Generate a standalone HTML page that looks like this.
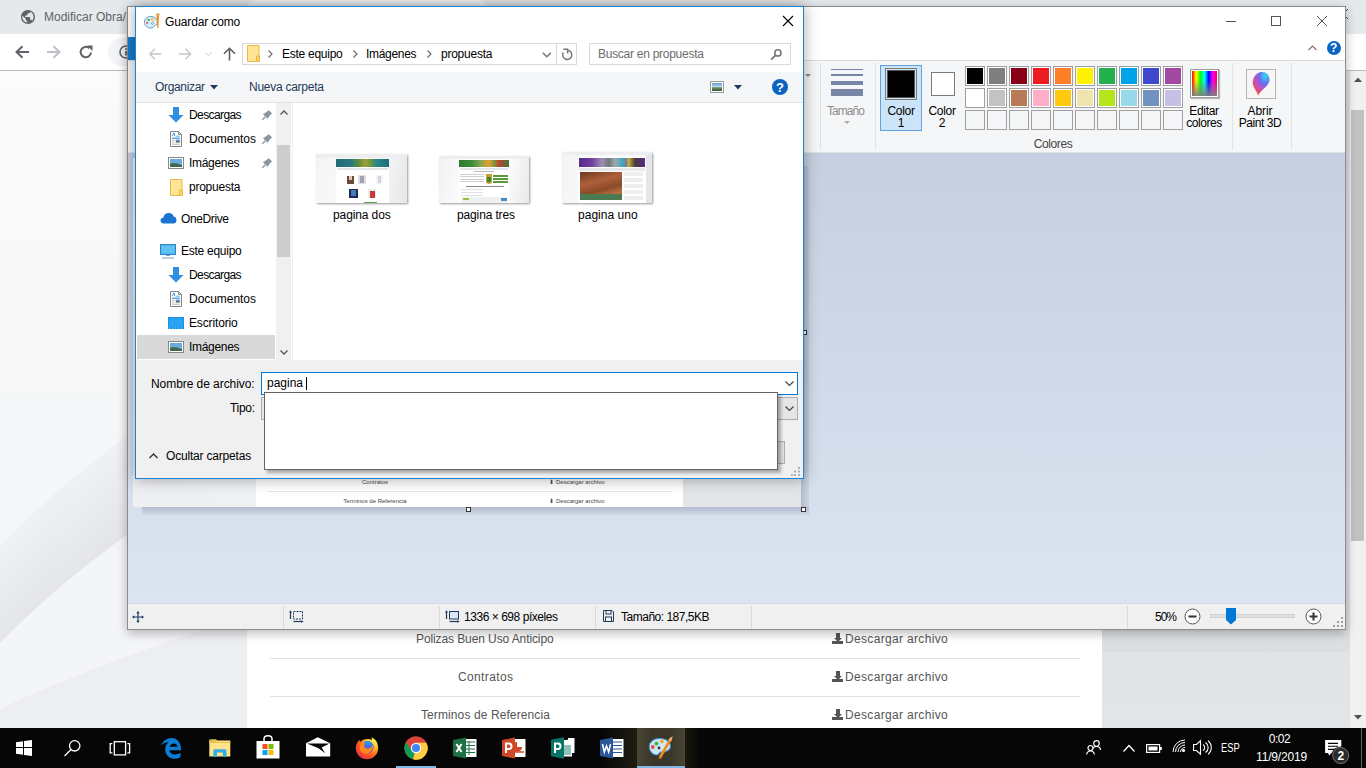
<!DOCTYPE html>
<html><head><meta charset="utf-8">
<style>
*{margin:0;padding:0;box-sizing:border-box}
html,body{width:1366px;height:768px;overflow:hidden;background:#fff;font-family:"Liberation Sans",sans-serif;font-size:12px;color:#000}
.a{position:absolute}
.t{position:absolute;white-space:nowrap;line-height:1}
svg{position:absolute;overflow:visible}
.pg{font-size:12px;color:#555}
.dl{display:block;width:11px;height:11px;background:linear-gradient(#555,#555) 4px 0/4px 5px no-repeat,linear-gradient(#555,#555) 0 8px/11px 3px no-repeat}
.dl::after{content:"";position:absolute;left:2px;top:5px;border-left:4px solid transparent;border-right:4px solid transparent;border-top:4px solid #555}
</style></head><body>

<!-- ============ CHROME (background) ============ -->
<div class="a" id="chrome" style="left:0;top:0;width:1366px;height:728px;background:#f3f4f6">
  <!-- tab strip -->
  <div class="a" style="left:0;top:0;width:1366px;height:34px;background:#e6e9ec"></div>
  <!-- nav bar -->
  <div class="a" style="left:0;top:34px;width:1366px;height:36px;background:#fff"></div>
  <div class="a" style="left:0;top:70px;width:1366px;height:1px;background:#b9babc"></div>
  <!-- page left bg -->
  <div class="a" style="left:0;top:71px;width:1350px;height:657px;background:linear-gradient(180deg,#fbfbfb 0%,#f6f7f8 50%,#f4f5f6 100%)"></div>
  <svg style="left:0;top:0" width="1350" height="728"><defs><linearGradient id="bandA" gradientUnits="userSpaceOnUse" x1="60" y1="495" x2="108" y2="550"><stop offset="0" stop-color="#eef0f2"/><stop offset="1" stop-color="#e3e5e8"/></linearGradient></defs><path d="M0 546Q150 390 450 250L450 350Q150 490 0 643Z" fill="url(#bandA)"/><path d="M0 643Q150 490 450 350L600 350L600 728L0 728Z" fill="#f4f5f7"/><path d="M0 709Q200 615 600 520L600 728L0 728Z" fill="#edeef1"/></svg>
  <!-- right grey -->
  <div class="a" style="left:1102px;top:71px;width:248px;height:657px;background:linear-gradient(180deg,#dcdee2 0,#dcdee2 581px,#e1e3e7 581px,#e3e5e8 100%)"></div>
  <!-- white column -->
  <div class="a" style="left:247px;top:71px;width:855px;height:657px;background:#fff"></div>
  <!-- scrollbar -->
  <div class="a" style="left:1350px;top:71px;width:16px;height:657px;background:#f1f1f1"></div>
  <div class="a" style="left:1351px;top:110px;width:13px;height:431px;background:#c1c1c1"></div>
  <div class="a" style="left:247px;top:0;width:240px;height:34px;border-radius:9px 9px 0 0;background:#f3f4f6"></div>
  <!-- tab -->
  <svg style="left:21px;top:10px" width="14" height="14" viewBox="2 2 20 20"><path d="M12 2C6.48 2 2 6.48 2 12s4.48 10 10 10 10-4.48 10-10S17.52 2 12 2zm-1 17.93c-3.95-.49-7-3.85-7-7.93 0-.62.08-1.21.21-1.79L9 15v1c0 1.1.9 2 2 2v1.93zm6.9-2.54c-.26-.81-1-1.39-1.9-1.39h-1v-3c0-.55-.45-1-1-1H8v-2h2c.55 0 1-.45 1-1V7h2c1.1 0 2-.9 2-2v-.41c2.93 1.19 5 4.06 5 7.41 0 2.08-.8 3.97-2.1 5.39z" fill="#5f6368"/></svg>
  <div class="t" style="left:44px;top:11px;color:#5f6368;font-size:12px">Modificar Obra/</div>
  <!-- nav -->
  <svg style="left:15px;top:45px" width="14" height="14"><path d="M14 7H2M7.5 1.2L1.5 7L7.5 12.8" stroke="#5f6368" stroke-width="2" fill="none"/></svg>
  <svg style="left:47px;top:45px" width="14" height="14"><path d="M0 7H12M6.5 1.2L12.5 7L6.5 12.8" stroke="#bdc1c6" stroke-width="2" fill="none"/></svg>
  <svg style="left:79px;top:45px" width="14" height="14"><path d="M12 7.5A5.2 5.2 0 1 1 10.3 3.2" stroke="#5f6368" stroke-width="2" fill="none"/><path d="M8 0.5H13.5V6Z" fill="#5f6368"/></svg>
  <div class="a" style="left:108px;top:38px;width:400px;height:28px;border-radius:14px;background:#f1f3f4"></div>
  <svg style="left:119px;top:45px" width="14" height="14"><circle cx="7" cy="7" r="6" fill="none" stroke="#5f6368" stroke-width="1.6"/><path d="M7 6V10.5" stroke="#5f6368" stroke-width="1.8"/><circle cx="7" cy="4" r="1" fill="#5f6368"/></svg>
  <svg style="left:1338px;top:9px" width="10" height="10"><path d="M0 0L10 10M10 0L0 10" stroke="#444" stroke-width="1"/></svg>
  <svg style="left:1354px;top:77px" width="8" height="5"><path d="M0 5L4 0.5L8 5Z" fill="#505050"/></svg>
  <svg style="left:1354px;top:715px" width="8" height="5"><path d="M0 0H8L4 4.5Z" fill="#505050"/></svg>
  <!-- page rows -->
  <div class="t pg" style="left:416px;top:633px;letter-spacing:-0.1px">Polizas Buen Uso Anticipo</div>
  <div class="t pg" style="left:845px;top:633px;letter-spacing:0.33px">Descargar archivo</div>
  <span class="dl a" style="left:832px;top:633px"></span>
  <div class="a" style="left:270px;top:658px;width:810px;height:1px;background:#dee2e6"></div>
  <div class="t pg" style="left:458px;top:671px;letter-spacing:0.37px">Contratos</div>
  <div class="t pg" style="left:845px;top:671px;letter-spacing:0.33px">Descargar archivo</div>
  <span class="dl a" style="left:832px;top:671px"></span>
  <div class="a" style="left:270px;top:696px;width:810px;height:1px;background:#dee2e6"></div>
  <div class="t pg" style="left:421px;top:709px;letter-spacing:0.1px">Terminos de Referencia</div>
  <div class="t pg" style="left:845px;top:709px;letter-spacing:0.33px">Descargar archivo</div>
  <span class="dl a" style="left:832px;top:709px"></span>
</div>

<!-- ============ PAINT WINDOW ============ -->
<div class="a" id="paint" style="left:127px;top:6px;width:1219px;height:624px;background:#fff;border:1px solid #8c8c8c;box-shadow:0 3px 10px rgba(0,0,0,.28)"></div>
<!-- title bar buttons -->
<div class="a" style="left:1226px;top:21px;width:10px;height:1px;background:#555"></div>
<div class="a" style="left:1271px;top:16px;width:10px;height:10px;border:1px solid #555"></div>
<svg style="left:1317px;top:16px" width="10" height="10"><path d="M0 0L10 10M10 0L0 10" stroke="#555" stroke-width="1"/></svg>
<!-- ribbon tab row -->
<div class="a" style="left:128px;top:37px;width:60px;height:23px;background:#1979ca"></div>
<svg style="left:1308px;top:45px" width="9" height="6"><path d="M0.5 5L4.5 1L8.5 5" stroke="#777" stroke-width="1.2" fill="none"/></svg>
<div class="a" style="left:1327px;top:41px;width:14px;height:14px;border-radius:50%;background:#0a64c0"></div>
<div class="t" style="left:1330px;top:42px;font-size:12px;font-weight:bold;color:#fff">?</div>
<!-- ribbon panel -->
<div class="a" style="left:128px;top:60px;width:1217px;height:93px;background:#f5f6f7;border-top:1px solid #dadbdc;border-bottom:1px solid #e1e2e4"></div>
<div class="a" style="left:820px;top:63px;width:1px;height:87px;background:#e2e3e4"></div>
<div class="a" style="left:875px;top:63px;width:1px;height:87px;background:#e2e3e4"></div>
<div class="a" style="left:1232px;top:63px;width:1px;height:87px;background:#e2e3e4"></div>
<div class="a" style="left:1291px;top:63px;width:1px;height:87px;background:#e2e3e4"></div>
<svg style="left:805px;top:74px" width="6" height="4"><path d="M0 0H6L3 3Z" fill="#888"/></svg>
<!-- Tamano -->
<div class="a" style="left:831px;top:69px;width:32px;height:1px;background:#7686a4"></div>
<div class="a" style="left:831px;top:74px;width:32px;height:2px;background:#7686a4"></div>
<div class="a" style="left:831px;top:81px;width:32px;height:4px;background:#7686a4"></div>
<div class="a" style="left:831px;top:89px;width:32px;height:7px;background:#7686a4"></div>
<div class="t" style="left:827px;top:105px;color:#8d8d8d;letter-spacing:-0.94px">Tamaño</div>
<svg style="left:844px;top:121px" width="6" height="4"><path d="M0 0H6L3 3Z" fill="#aaa"/></svg>
<!-- Color 1 -->
<div class="a" style="left:880px;top:65px;width:42px;height:66px;background:#cce4f7;border:1px solid #62a2e4"></div>
<div class="a" style="left:885px;top:68px;width:32px;height:32px;border:1px solid #7a7a7a;background:#cce4f7;padding:1px"><div style="width:100%;height:100%;background:#000;border:1px solid #555"></div></div>
<div class="t" style="left:885px;top:105px;text-align:center;width:32px;letter-spacing:-0.3px">Color</div>
<div class="t" style="left:885px;top:117px;text-align:center;width:32px">1</div>
<!-- Color 2 -->
<div class="a" style="left:931px;top:72px;width:24px;height:24px;border:1px solid #7a7a7a;background:#fff"></div>
<div class="t" style="left:926px;top:105px;text-align:center;width:32px;letter-spacing:-0.3px">Color</div>
<div class="t" style="left:926px;top:117px;text-align:center;width:32px">2</div>
<div class="a" style="left:965px;top:66px;width:20px;height:20px;border:1px solid #a0a0a0;background:#fff;padding:1px"><div style="width:100%;height:100%;background:#000000"></div></div>
<div class="a" style="left:987px;top:66px;width:20px;height:20px;border:1px solid #a0a0a0;background:#fff;padding:1px"><div style="width:100%;height:100%;background:#7f7f7f"></div></div>
<div class="a" style="left:1009px;top:66px;width:20px;height:20px;border:1px solid #a0a0a0;background:#fff;padding:1px"><div style="width:100%;height:100%;background:#880015"></div></div>
<div class="a" style="left:1031px;top:66px;width:20px;height:20px;border:1px solid #a0a0a0;background:#fff;padding:1px"><div style="width:100%;height:100%;background:#ed1c24"></div></div>
<div class="a" style="left:1053px;top:66px;width:20px;height:20px;border:1px solid #a0a0a0;background:#fff;padding:1px"><div style="width:100%;height:100%;background:#ff7f27"></div></div>
<div class="a" style="left:1075px;top:66px;width:20px;height:20px;border:1px solid #a0a0a0;background:#fff;padding:1px"><div style="width:100%;height:100%;background:#fff200"></div></div>
<div class="a" style="left:1097px;top:66px;width:20px;height:20px;border:1px solid #a0a0a0;background:#fff;padding:1px"><div style="width:100%;height:100%;background:#22b14c"></div></div>
<div class="a" style="left:1119px;top:66px;width:20px;height:20px;border:1px solid #a0a0a0;background:#fff;padding:1px"><div style="width:100%;height:100%;background:#00a2e8"></div></div>
<div class="a" style="left:1141px;top:66px;width:20px;height:20px;border:1px solid #a0a0a0;background:#fff;padding:1px"><div style="width:100%;height:100%;background:#3f48cc"></div></div>
<div class="a" style="left:1163px;top:66px;width:20px;height:20px;border:1px solid #a0a0a0;background:#fff;padding:1px"><div style="width:100%;height:100%;background:#a349a4"></div></div>
<div class="a" style="left:965px;top:88px;width:20px;height:20px;border:1px solid #a0a0a0;background:#fff;padding:1px"><div style="width:100%;height:100%;background:#ffffff"></div></div>
<div class="a" style="left:987px;top:88px;width:20px;height:20px;border:1px solid #a0a0a0;background:#fff;padding:1px"><div style="width:100%;height:100%;background:#c3c3c3"></div></div>
<div class="a" style="left:1009px;top:88px;width:20px;height:20px;border:1px solid #a0a0a0;background:#fff;padding:1px"><div style="width:100%;height:100%;background:#b97a57"></div></div>
<div class="a" style="left:1031px;top:88px;width:20px;height:20px;border:1px solid #a0a0a0;background:#fff;padding:1px"><div style="width:100%;height:100%;background:#ffaec9"></div></div>
<div class="a" style="left:1053px;top:88px;width:20px;height:20px;border:1px solid #a0a0a0;background:#fff;padding:1px"><div style="width:100%;height:100%;background:#ffc90e"></div></div>
<div class="a" style="left:1075px;top:88px;width:20px;height:20px;border:1px solid #a0a0a0;background:#fff;padding:1px"><div style="width:100%;height:100%;background:#efe4b0"></div></div>
<div class="a" style="left:1097px;top:88px;width:20px;height:20px;border:1px solid #a0a0a0;background:#fff;padding:1px"><div style="width:100%;height:100%;background:#b5e61d"></div></div>
<div class="a" style="left:1119px;top:88px;width:20px;height:20px;border:1px solid #a0a0a0;background:#fff;padding:1px"><div style="width:100%;height:100%;background:#99d9ea"></div></div>
<div class="a" style="left:1141px;top:88px;width:20px;height:20px;border:1px solid #a0a0a0;background:#fff;padding:1px"><div style="width:100%;height:100%;background:#7092be"></div></div>
<div class="a" style="left:1163px;top:88px;width:20px;height:20px;border:1px solid #a0a0a0;background:#fff;padding:1px"><div style="width:100%;height:100%;background:#c8bfe7"></div></div>
<div class="a" style="left:965px;top:110px;width:20px;height:20px;border:1px solid #a0a0a0;background:#f5f6f7"></div>
<div class="a" style="left:987px;top:110px;width:20px;height:20px;border:1px solid #a0a0a0;background:#f5f6f7"></div>
<div class="a" style="left:1009px;top:110px;width:20px;height:20px;border:1px solid #a0a0a0;background:#f5f6f7"></div>
<div class="a" style="left:1031px;top:110px;width:20px;height:20px;border:1px solid #a0a0a0;background:#f5f6f7"></div>
<div class="a" style="left:1053px;top:110px;width:20px;height:20px;border:1px solid #a0a0a0;background:#f5f6f7"></div>
<div class="a" style="left:1075px;top:110px;width:20px;height:20px;border:1px solid #a0a0a0;background:#f5f6f7"></div>
<div class="a" style="left:1097px;top:110px;width:20px;height:20px;border:1px solid #a0a0a0;background:#f5f6f7"></div>
<div class="a" style="left:1119px;top:110px;width:20px;height:20px;border:1px solid #a0a0a0;background:#f5f6f7"></div>
<div class="a" style="left:1141px;top:110px;width:20px;height:20px;border:1px solid #a0a0a0;background:#f5f6f7"></div>
<div class="a" style="left:1163px;top:110px;width:20px;height:20px;border:1px solid #a0a0a0;background:#f5f6f7"></div>
<div class="t" style="left:1023px;top:138px;width:60px;text-align:center;color:#444;letter-spacing:-0.38px">Colores</div>
<!-- Editar colores -->
<div class="a" style="left:1190px;top:69px;width:29px;height:29px;border:1px solid #9a9a9a;background:#fff;padding:1px;box-shadow:1px 1px 1px rgba(0,0,0,.25)"><div style="width:100%;height:100%;background:linear-gradient(180deg,rgba(128,128,128,0) 0%,rgba(128,128,128,0) 35%,rgba(128,128,128,.95) 100%),linear-gradient(90deg,#f00 0%,#ff0 17%,#0f0 33%,#0ff 50%,#00f 67%,#f0f 83%,#f04 100%)"></div></div>
<div class="t" style="left:1174px;top:105px;width:60px;text-align:center;letter-spacing:-0.3px">Editar</div>
<div class="t" style="left:1174px;top:117px;width:60px;text-align:center;letter-spacing:-0.45px">colores</div>
<!-- Paint 3D -->
<div class="a" style="left:1246px;top:69px;width:30px;height:30px;border:1px solid #b4b4b4;background:#f6f6f6"></div>
<svg style="left:1251px;top:71px" width="20" height="26"><defs><radialGradient id="p3" cx=".75" cy=".15" r="1"><stop offset="0" stop-color="#2fe0f0"/><stop offset=".35" stop-color="#6a6cf0"/><stop offset=".6" stop-color="#c050c0"/><stop offset=".8" stop-color="#f04a70"/><stop offset="1" stop-color="#ffa020"/></radialGradient></defs><path d="M11 1C15.5 1 18.5 4.5 18.5 8.5C18.5 13 14 16.5 10 20.5C8.5 22 7.5 23.5 7 25C6.5 21 3 18 2 14C1 9.5 3 5 6 2.8C7.5 1.6 9.2 1 11 1Z" fill="url(#p3)"/></svg>
<div class="t" style="left:1230px;top:105px;width:60px;text-align:center;letter-spacing:-0.08px">Abrir</div>
<div class="t" style="left:1230px;top:117px;width:60px;text-align:center;letter-spacing:-0.43px">Paint 3D</div>
<!-- canvas -->
<div class="a" style="left:128px;top:153px;width:1217px;height:450px;background:linear-gradient(180deg,#c6cfe1 0%,#dbe4f0 100%)"></div>
<!-- image on canvas -->
<div class="a" style="left:801px;top:166px;width:8px;height:341px;background:linear-gradient(90deg,rgba(80,95,125,.28),rgba(80,95,125,.08))"></div>
<div class="a" style="left:142px;top:507px;width:667px;height:8px;background:linear-gradient(180deg,rgba(80,95,125,.28),rgba(80,95,125,.06))"></div>
<div class="a" style="left:133px;top:158px;width:668px;height:349px;overflow:hidden;background:linear-gradient(160deg,#f6f7f8 0%,#eceef0 50%,#f3f4f6 100%)">
  <div class="a" style="left:123px;top:0;width:427px;height:349px;background:#fff"></div>
  <div class="a" style="left:550px;top:0;width:118px;height:349px;background:#e3e5e8"></div>
  <div class="t" style="left:176px;top:321px;width:132px;text-align:center;font-size:6px;color:#444">Contratos</div>
  <div class="t" style="left:387px;top:321px;width:114px;text-align:center;font-size:6px;color:#444">&#11015; Descargar archivo</div>
  <div class="a" style="left:134px;top:333px;width:405px;height:1px;background:#e4e4e4"></div>
  <div class="t" style="left:176px;top:340px;width:132px;text-align:center;font-size:6px;color:#444">Terminos de Referencia</div>
  <div class="t" style="left:387px;top:340px;width:114px;text-align:center;font-size:6px;color:#444">&#11015; Descargar archivo</div>
</div>
<div class="a" style="left:466px;top:507px;width:5px;height:5px;border:1px solid #333;background:#fff"></div>
<div class="a" style="left:801px;top:507px;width:5px;height:5px;border:1px solid #333;background:#fff"></div>
<div class="a" style="left:802px;top:330px;width:5px;height:5px;border:1px solid #333;background:#fff"></div>
<!-- status bar -->
<div class="a" style="left:128px;top:603px;width:1217px;height:26px;background:#f0f0f0;border-top:1px solid #dadada"></div>
<div class="a" style="left:283px;top:606px;width:1px;height:22px;background:#dadada"></div>
<div class="a" style="left:439px;top:606px;width:1px;height:22px;background:#dadada"></div>
<div class="a" style="left:595px;top:606px;width:1px;height:22px;background:#dadada"></div>
<div class="a" style="left:751px;top:606px;width:1px;height:22px;background:#dadada"></div>
<div class="a" style="left:1127px;top:606px;width:1px;height:22px;background:#dadada"></div>
<svg style="left:132px;top:611px" width="12" height="12"><path d="M6 1.5V10.5M1.5 6H10.5" stroke="#1e3a5f" stroke-width="1.2"/><path d="M6 0L4.2 2.2H7.8ZM6 12L4.2 9.8H7.8ZM0 6L2.2 4.2V7.8ZM12 6L9.8 4.2V7.8Z" fill="#1e3a5f"/></svg>
<svg style="left:289px;top:610px" width="15" height="13"><path d="M1.5 2V9" stroke="#1e3a5f" stroke-width="1.2"/><path d="M1.5 0.3L0 2.5H3Z" fill="#1e3a5f"/><rect x="4.5" y="1.5" width="9" height="7.5" fill="none" stroke="#1e3a5f" stroke-dasharray="2 1"/><path d="M4.5 11.5H12.5" stroke="#1e3a5f" stroke-width="1.2"/><path d="M14.5 11.5L12.3 10V13Z" fill="#1e3a5f"/></svg>
<svg style="left:445px;top:610px" width="15" height="13"><path d="M1.5 2V9" stroke="#1e3a5f" stroke-width="1.2"/><path d="M1.5 0.3L0 2.5H3Z" fill="#1e3a5f"/><rect x="4.5" y="1.5" width="9" height="7.5" fill="#dbe8f4" stroke="#1e3a5f"/><path d="M4.5 11.5H12.5" stroke="#1e3a5f" stroke-width="1.2"/><path d="M14.5 11.5L12.3 10V13Z" fill="#1e3a5f"/></svg>
<div class="t" style="left:464px;top:611px;letter-spacing:-0.46px">1336 × 698 píxeles</div>
<svg style="left:603px;top:610px" width="11" height="12"><path d="M0.5 0.5H9L10.5 2V11.5H0.5Z" fill="none" stroke="#1e3a5f"/><rect x="3" y="0.5" width="5" height="3.5" fill="none" stroke="#1e3a5f"/><rect x="2.5" y="7" width="6" height="4.5" fill="none" stroke="#1e3a5f"/></svg>
<div class="t" style="left:621px;top:611px;letter-spacing:-0.49px">Tamaño: 187,5KB</div>
<div class="t" style="left:1155px;top:611px;letter-spacing:-1.0px">50%</div>
<svg style="left:1184px;top:608px" width="17" height="17"><circle cx="8.5" cy="8.5" r="7.5" fill="#fff" stroke="#555"/><path d="M4.5 8.5H12.5" stroke="#333" stroke-width="2"/></svg>
<div class="a" style="left:1210px;top:614px;width:85px;height:4px;background:#e0e0e0;border:1px solid #d0d0d0"></div>
<svg style="left:1226px;top:608px" width="11" height="17"><path d="M0 0H10V12L5 16.5L0 12Z" fill="#0078d7"/></svg>
<svg style="left:1305px;top:608px" width="17" height="17"><circle cx="8.5" cy="8.5" r="7.5" fill="#fff" stroke="#555"/><path d="M4.5 8.5H12.5M8.5 4.5V12.5" stroke="#333" stroke-width="2"/></svg>
<svg style="left:1333px;top:617px" width="10" height="10"><g fill="#a0a0a0"><rect x="8" y="0" width="2" height="2"/><rect x="4" y="4" width="2" height="2"/><rect x="8" y="4" width="2" height="2"/><rect x="0" y="8" width="2" height="2"/><rect x="4" y="8" width="2" height="2"/><rect x="8" y="8" width="2" height="2"/></g></svg>


<!-- ============ SAVE DIALOG ============ -->
<div class="a" id="dlg" style="left:135px;top:6px;width:669px;height:473px;background:#fff;border:1px solid #1883d7;box-shadow:0 0 14px rgba(0,0,0,.35)"></div>
<!-- title -->
<svg style="left:144px;top:13px" width="17" height="16"><path d="M6.8 3.5C2.8 3.5 0.5 6 0.5 9.2C0.5 12.6 3.2 15 6.8 15C9.2 15 9.6 13.5 10.8 12.8C12.3 12 13.5 11 13.5 9C13.5 5.8 10.8 3.5 6.8 3.5Z" fill="#daedf8" stroke="#4a90c8" stroke-width="0.9"/><circle cx="4.7" cy="6.9" r="1.2" fill="#3cb44a"/><circle cx="8.5" cy="6.3" r="1.1" fill="#fff3c0" stroke="#f5a623" stroke-width="0.9"/><circle cx="3.2" cy="9.8" r="1.1" fill="#e94e3c"/><circle cx="8.5" cy="10.4" r="1" fill="#fff" stroke="#3d8ac0" stroke-width="0.8"/><ellipse cx="13.8" cy="1.6" rx="2.2" ry="1.3" fill="#e0b070"/><path d="M12.6 2.6H15L14.3 15.2H13.3Z" fill="#f08a1a"/></svg>
<div class="t" style="left:165px;top:16px;font-size:12px;color:#000;letter-spacing:-0.13px">Guardar como</div>
<svg style="left:783px;top:16px" width="10" height="10"><path d="M0 0L10 10M10 0L0 10" stroke="#000" stroke-width="1.1"/></svg>
<!-- nav buttons -->
<svg style="left:149px;top:48px" width="13" height="12"><path d="M12.5 6H1M6 0.8L0.8 6L6 11.2" stroke="#c6c6c6" stroke-width="1.3" fill="none"/></svg>
<svg style="left:179px;top:48px" width="13" height="12"><path d="M0 6H11.5M6.5 0.8L11.7 6L6.5 11.2" stroke="#c6c6c6" stroke-width="1.3" fill="none"/></svg>
<svg style="left:205px;top:52px" width="7" height="4"><path d="M0.5 0.5L3.5 3.3L6.5 0.5" stroke="#c6c6c6" stroke-width="1" fill="none"/></svg>
<svg style="left:223px;top:47px" width="13" height="14"><path d="M6.5 13.5V1.5M1 6.8L6.5 1.3L12 6.8" stroke="#5d5d5d" stroke-width="1.6" fill="none"/></svg>
<!-- address bar -->
<div class="a" style="left:242px;top:43px;width:335px;height:22px;border:1px solid #d9d9d9;background:#fff"></div>
<div class="a" style="left:556px;top:44px;width:1px;height:20px;background:#d9d9d9"></div>
<svg style="left:247px;top:45px" width="14" height="17"><path d="M0.5 0.5H12V16.5H0.5Z" fill="#ffe594" stroke="#e8b84a"/><path d="M9.5 11V16.5H12.5V11Z" fill="#ffd560" stroke="#e8b84a"/></svg>
<svg style="left:268px;top:50px" width="5" height="8"><path d="M0.5 0.5L4 4L0.5 7.5" stroke="#666" stroke-width="1.1" fill="none"/></svg>
<div class="t" style="left:282px;top:48px;letter-spacing:-0.26px">Este equipo</div>
<svg style="left:353px;top:50px" width="5" height="8"><path d="M0.5 0.5L4 4L0.5 7.5" stroke="#666" stroke-width="1.1" fill="none"/></svg>
<div class="t" style="left:366px;top:48px;letter-spacing:-0.3px">Imágenes</div>
<svg style="left:427px;top:50px" width="5" height="8"><path d="M0.5 0.5L4 4L0.5 7.5" stroke="#666" stroke-width="1.1" fill="none"/></svg>
<div class="t" style="left:441px;top:48px;letter-spacing:-0.24px">propuesta</div>
<svg style="left:542px;top:52px" width="10" height="6"><path d="M0.8 0.8L4.8 4.8L8.8 0.8" stroke="#777" stroke-width="1.5" fill="none"/></svg>
<svg style="left:561px;top:48px" width="13" height="14"><path d="M7.2 2.3A4.6 4.6 0 1 1 2.3 4.4" stroke="#777" stroke-width="1.5" fill="none"/><path d="M2.4 1.2H6.6V5.4" stroke="#777" stroke-width="1.5" fill="none"/></svg>
<!-- search -->
<div class="a" style="left:589px;top:43px;width:202px;height:22px;border:1px solid #d9d9d9;background:#fff"></div>
<div class="t" style="left:598px;top:48px;color:#6d6d6d;letter-spacing:-0.27px">Buscar en propuesta</div>
<svg style="left:770px;top:49px" width="12" height="12"><circle cx="7.9" cy="3.9" r="3.1" fill="none" stroke="#777" stroke-width="1.6"/><path d="M5.6 6.2L1.2 10.6" stroke="#777" stroke-width="1.8"/></svg>
<!-- toolbar -->
<div class="a" style="left:136px;top:72px;width:667px;height:31px;background:#f5f6f7;border-bottom:1px solid #e3e4e5"></div>
<div class="t" style="left:155px;top:81px;color:#1e395b;letter-spacing:-0.34px">Organizar</div>
<svg style="left:210px;top:85px" width="8" height="5"><path d="M0 0H8L4 4.5Z" fill="#1e395b"/></svg>
<div class="t" style="left:249px;top:81px;color:#1e395b;letter-spacing:-0.26px">Nueva carpeta</div>
<div class="a" style="left:710px;top:81px;width:14px;height:12px;border:1px solid #9a9a9a;background:#fff;padding:1px"><div style="width:100%;height:100%;background:linear-gradient(180deg,#5b9bd5 0%,#b8d4ee 45%,#6b8e5a 60%,#2f5a3a 100%)"></div></div>
<svg style="left:734px;top:85px" width="8" height="5"><path d="M0 0H8L4 4.5Z" fill="#1e395b"/></svg>
<div class="a" style="left:772px;top:79px;width:16px;height:16px;border-radius:50%;background:#0a64c0"></div>
<div class="t" style="left:776px;top:81px;font-size:13px;font-weight:bold;color:#fff">?</div>
<!-- nav pane -->
<div class="a" style="left:136px;top:103px;width:140px;height:257px;background:#fff"></div>
<div class="a" style="left:276px;top:103px;width:15px;height:257px;background:#f0f0f0"></div>
<div class="a" style="left:277px;top:145px;width:13px;height:112px;background:#cdcdcd"></div>
<svg style="left:280px;top:110px" width="8" height="5"><path d="M0.5 4.5L4 1L7.5 4.5" stroke="#555" stroke-width="1.3" fill="none"/></svg>
<svg style="left:280px;top:350px" width="8" height="5"><path d="M0.5 0.5L4 4L7.5 0.5" stroke="#555" stroke-width="1.3" fill="none"/></svg>
<div class="a" style="left:292px;top:103px;width:1px;height:257px;background:#f0f0f0"></div>
<div class="a" style="left:137px;top:335px;width:138px;height:24px;background:#d9d9d9"></div>
<svg style="left:168px;top:107px" width="16" height="16"><path d="M5 0H11V8H15.5L8 15.5L0.5 8H5Z" fill="#2f8fe0"/></svg>
<div class="t" style="left:189px;top:109px;letter-spacing:-0.6px">Descargas</div>
<svg style="left:258px;top:106px" width="18" height="18"><path d="M10.5 4L14.2 7.6L12.5 8.4L9.6 12.8L5 8.3L9.3 5.6Z" fill="#8a96a0"/><path d="M4.3 13.8L7.2 10.9" stroke="#8a96a0" stroke-width="1.4"/></svg>
<svg style="left:170px;top:131px" width="12" height="16"><path d="M0.5 0.5H8.5L11.5 3.5V15.5H0.5Z" fill="#fff" stroke="#858585"/><path d="M8.5 0.5V3.5H11.5" fill="none" stroke="#858585"/><path d="M2.2 5.3L4 1.8L5 5.3" stroke="#2f8ae0" stroke-width="0.9" fill="none"/><path d="M6 5.2H9.6" stroke="#45a8e8" stroke-width="0.9"/><path d="M2 7.2H9.8" stroke="#1878d8" stroke-width="1"/><path d="M2 9.3H4.4M2 11.2H4.4" stroke="#9a9a9a" stroke-width="0.7"/><rect x="5.8" y="8.6" width="4" height="1.4" fill="#5a8ef0"/><rect x="5.8" y="10.2" width="4" height="1.3" fill="#2a5a2a"/><path d="M2 13.2H9.8" stroke="#aaa" stroke-width="0.8"/></svg>
<div class="t" style="left:189px;top:133px;letter-spacing:-0.04px">Documentos</div>
<svg style="left:258px;top:130px" width="18" height="18"><path d="M10.5 4L14.2 7.6L12.5 8.4L9.6 12.8L5 8.3L9.3 5.6Z" fill="#8a96a0"/><path d="M4.3 13.8L7.2 10.9" stroke="#8a96a0" stroke-width="1.4"/></svg>
<svg style="left:168px;top:157px" width="16" height="12"><rect x="0.5" y="0.5" width="15" height="11" fill="#fff" stroke="#888"/><rect x="2" y="2" width="12" height="8" fill="#6fa8dc"/><path d="M2 7C5 5 8 6 14 8V10H2Z" fill="#3d6b4a"/></svg>
<div class="t" style="left:189px;top:157px;letter-spacing:-0.3px">Imágenes</div>
<svg style="left:258px;top:154px" width="18" height="18"><path d="M10.5 4L14.2 7.6L12.5 8.4L9.6 12.8L5 8.3L9.3 5.6Z" fill="#8a96a0"/><path d="M4.3 13.8L7.2 10.9" stroke="#8a96a0" stroke-width="1.4"/></svg>
<svg style="left:170px;top:179px" width="14" height="17"><path d="M0.5 0.5H12V16.5H0.5Z" fill="#ffe594" stroke="#e8b84a"/><path d="M9.5 11V16.5H12.5V11Z" fill="#ffd560" stroke="#e8b84a"/></svg>
<div class="t" style="left:189px;top:181px;letter-spacing:-0.24px">propuesta</div>
<svg style="left:160px;top:212px" width="17" height="12"><path d="M3.5 11.5C1.5 11.5 0.5 10 0.5 8.5C0.5 7 1.8 5.8 3.3 5.8C3.8 3 6 1 8.8 1C11.3 1 13.2 2.6 13.8 4.8C15.5 5 16.5 6.3 16.5 8.2C16.5 10.2 15.2 11.5 13.5 11.5Z" fill="#1a73d2"/></svg>
<div class="t" style="left:181px;top:213px;letter-spacing:-0.39px">OneDrive</div>
<svg style="left:160px;top:244px" width="16" height="15"><rect x="0.5" y="0.5" width="15" height="10" fill="#4cb3f0" stroke="#2a86c8"/><rect x="1.5" y="1.5" width="13" height="8" fill="#5fc2f5"/><path d="M6 11.5H10M2 14H14" stroke="#7aa7cc" stroke-width="1.2"/></svg>
<div class="t" style="left:181px;top:245px;letter-spacing:-0.26px">Este equipo</div>
<svg style="left:168px;top:267px" width="16" height="16"><path d="M5 0H11V8H15.5L8 15.5L0.5 8H5Z" fill="#2f8fe0"/></svg>
<div class="t" style="left:189px;top:269px;letter-spacing:-0.6px">Descargas</div>
<svg style="left:170px;top:291px" width="12" height="16"><path d="M0.5 0.5H8.5L11.5 3.5V15.5H0.5Z" fill="#fff" stroke="#858585"/><path d="M8.5 0.5V3.5H11.5" fill="none" stroke="#858585"/><path d="M2.2 5.3L4 1.8L5 5.3" stroke="#2f8ae0" stroke-width="0.9" fill="none"/><path d="M6 5.2H9.6" stroke="#45a8e8" stroke-width="0.9"/><path d="M2 7.2H9.8" stroke="#1878d8" stroke-width="1"/><path d="M2 9.3H4.4M2 11.2H4.4" stroke="#9a9a9a" stroke-width="0.7"/><rect x="5.8" y="8.6" width="4" height="1.4" fill="#5a8ef0"/><rect x="5.8" y="10.2" width="4" height="1.3" fill="#2a5a2a"/><path d="M2 13.2H9.8" stroke="#aaa" stroke-width="0.8"/></svg>
<div class="t" style="left:189px;top:293px;letter-spacing:-0.04px">Documentos</div>
<svg style="left:168px;top:317px" width="16" height="12"><rect x="0" y="0" width="16" height="12" fill="#1890e8"/><rect x="1" y="1" width="14" height="9" fill="#27a4f2"/><path d="M1 11H15" stroke="#ddeefa" stroke-width="0.8" stroke-dasharray="1 2"/></svg>
<div class="t" style="left:189px;top:317px;letter-spacing:-0.14px">Escritorio</div>
<svg style="left:168px;top:341px" width="16" height="12"><rect x="0.5" y="0.5" width="15" height="11" fill="#fff" stroke="#888"/><rect x="2" y="2" width="12" height="8" fill="#6fa8dc"/><path d="M2 7C5 5 8 6 14 8V10H2Z" fill="#3d6b4a"/></svg>
<div class="t" style="left:189px;top:341px;letter-spacing:-0.3px">Imágenes</div>

<!-- thumbnails -->
<div class="a" style="left:316px;top:154px;width:91px;height:49px;background:linear-gradient(100deg,#f3f4f5 0%,#fafafa 40%,#f0f1f3 80%,#e4e6e9 100%);box-shadow:1px 1px 2px rgba(0,0,0,.4);overflow:hidden">
  <div class="a" style="left:0;top:0;width:91px;height:4px;background:#eceef0"></div>
  <div class="a" style="left:20px;top:5px;width:53px;height:44px;background:#fff"></div>
  <div class="a" style="left:20px;top:5px;width:53px;height:8px;background:linear-gradient(90deg,#1f6a78 0%,#2a7a80 30%,#5a8a3a 42%,#a0a040 55%,#6a9a30 65%,#2a8a8a 75%,#1f6a78 100%)"></div>
  <div class="a" style="left:21px;top:14px;width:51px;height:2px;background:#e3e6ea"></div>
  <div class="a" style="left:31px;top:22px;width:7px;height:8px;background:#6a4a3a"></div>
  <div class="a" style="left:33px;top:22px;width:3px;height:4px;background:#e6c8b0"></div>
  <div class="a" style="left:42px;top:21px;width:8px;height:9px;background:#e8dcd8"></div>
  <div class="a" style="left:44px;top:22px;width:4px;height:7px;background:#9aa6c0"></div>
  <div class="a" style="left:60px;top:21px;width:7px;height:9px;background:#f4f4f6"></div>
  <div class="a" style="left:62px;top:22px;width:3px;height:7px;background:#d0d4dc"></div>
  <div class="a" style="left:33px;top:35px;width:9px;height:9px;background:#1a2a5a"></div>
  <div class="a" style="left:35px;top:36px;width:5px;height:6px;background:#4a7ab0"></div>
  <div class="a" style="left:52px;top:35px;width:8px;height:9px;background:#e8e8e6"></div>
  <div class="a" style="left:54px;top:37px;width:5px;height:7px;background:#c83a3a"></div>
  <div class="a" style="left:48px;top:48px;width:13px;height:1px;background:#5aa050"></div>
</div>
<div class="t" style="left:333px;top:209px;letter-spacing:-0.11px">pagina dos</div>
<div class="a" style="left:439px;top:156px;width:90px;height:47px;background:linear-gradient(100deg,#f0f1f3 0%,#fafafa 25%,#f6f7f8 50%,#fbfbfb 75%,#e6e8ea 100%);box-shadow:1px 1px 2px rgba(0,0,0,.4);overflow:hidden">
  <div class="a" style="left:0;top:0;width:90px;height:3px;background:#eceef0"></div>
  <div class="a" style="left:20px;top:3px;width:50px;height:44px;background:#fff"></div>
  <div class="a" style="left:20px;top:4px;width:50px;height:7px;background:linear-gradient(90deg,#2f7a30 0%,#3a8a3a 25%,#8aa850 45%,#e89a30 60%,#7a9a40 70%,#c04030 80%,#3a7a3a 100%)"></div>
  <div class="a" style="left:21px;top:12px;width:48px;height:2px;background:#e3e6ea"></div>
  <div class="a" style="left:35px;top:15px;width:20px;height:1px;background:#bbb"></div>
  <div class="a" style="left:21px;top:18px;width:24px;height:10px;background:repeating-linear-gradient(180deg,#d0d0d0 0 1px,#fff 1px 2.5px)"></div>
  <div class="a" style="left:47px;top:18px;width:6px;height:10px;border-radius:0 0 3px 3px;background:#c8a030"></div>
  <div class="a" style="left:48px;top:21px;width:4px;height:5px;background:#3a8a3a"></div>
  <div class="a" style="left:54px;top:19px;width:15px;height:8px;background:repeating-linear-gradient(180deg,#5a9a3a 0 2px,#fff 2px 3px)"></div>
  <div class="a" style="left:27px;top:30px;width:38px;height:1px;background:#888"></div>
  <div class="a" style="left:22px;top:33px;width:22px;height:8px;background:repeating-linear-gradient(180deg,#e0e0e0 0 1px,#fff 1px 3px)"></div>
  <div class="a" style="left:22px;top:41px;width:46px;height:6px;background:#eef0f2"></div>
  <div class="a" style="left:24px;top:42px;width:6px;height:2px;background:#9ac040"></div>
  <div class="a" style="left:62px;top:42px;width:6px;height:3px;background:#4a8ac8"></div>
</div>
<div class="t" style="left:457px;top:209px;letter-spacing:-0.14px">pagina tres</div>
<div class="a" style="left:562px;top:152px;width:90px;height:51px;background:linear-gradient(100deg,#f3f4f5 0%,#fafafa 40%,#f6f7f8 100%);box-shadow:1px 1px 2px rgba(0,0,0,.4);overflow:hidden">
  <div class="a" style="left:0;top:0;width:90px;height:3px;background:#eceef0"></div>
  <div class="a" style="left:16px;top:5px;width:68px;height:46px;background:#fff"></div>
  <div class="a" style="left:84px;top:3px;width:6px;height:48px;background:#e3e5e8"></div>
  <div class="a" style="left:17px;top:6px;width:66px;height:9px;background:linear-gradient(90deg,#5a2a8a 0%,#7040a0 20%,#a090b0 35%,#707880 45%,#a0a8a8 55%,#40a8c8 65%,#7a8088 72%,#c8b040 75%,#4a3a3a 85%,#5a2a8a 100%)"></div>
  <div class="a" style="left:17px;top:16px;width:66px;height:3px;background:#e6e8ea"></div>
  <div class="a" style="left:18px;top:20px;width:42px;height:28px;background:linear-gradient(165deg,#6a3a20 0%,#b0603a 35%,#8a4a28 60%,#c07040 80%,#7a4020 100%)"></div>
  <div class="a" style="left:18px;top:42px;width:42px;height:6px;background:#4a7a50"></div>
  <div class="a" style="left:62px;top:20px;width:19px;height:28px;background:repeating-linear-gradient(180deg,#eceef0 0 4px,#fff 4px 6px)"></div>
</div>
<div class="t" style="left:578px;top:209px;letter-spacing:0.03px">pagina uno</div>
<!-- bottom area -->
<div class="a" style="left:136px;top:360px;width:667px;height:118px;background:#f0f0f0"></div>
<div class="t" style="left:151px;top:378px;letter-spacing:-0.06px">Nombre de archivo:</div>
<div class="a" style="left:261px;top:372px;width:537px;height:23px;border:1px solid #0078d7;background:#fff"></div>
<div class="t" style="left:267px;top:377px">pagina </div>
<div class="a" style="left:306px;top:377px;width:1px;height:13px;background:#000"></div>
<svg style="left:785px;top:381px" width="9" height="6"><path d="M0.5 0.5L4.5 4.5L8.5 0.5" stroke="#444" stroke-width="1.2" fill="none"/></svg>
<div class="t" style="left:230px;top:402px;letter-spacing:-0.3px">Tipo:</div>
<div class="a" style="left:261px;top:397px;width:537px;height:23px;border:1px solid #adadad;background:#e5e5e5"></div>
<svg style="left:785px;top:406px" width="9" height="6"><path d="M0.5 0.5L4.5 4.5L8.5 0.5" stroke="#444" stroke-width="1.2" fill="none"/></svg>
<div class="a" style="left:700px;top:441px;width:85px;height:23px;border:1px solid #adadad;background:#e1e1e1"></div>
<svg style="left:149px;top:453px" width="9" height="6"><path d="M0.5 5L4.5 1L8.5 5" stroke="#333" stroke-width="1.4" fill="none"/></svg>
<div class="t" style="left:166px;top:450px;letter-spacing:-0.19px">Ocultar carpetas</div>
<svg style="left:791px;top:467px" width="10" height="10"><g fill="#b0b0b0"><rect x="7" y="0" width="2" height="2"/><rect x="3" y="3.5" width="2" height="2"/><rect x="7" y="3.5" width="2" height="2"/><rect x="0" y="7" width="2" height="2"/><rect x="3" y="7" width="2" height="2"/><rect x="7" y="7" width="2" height="2"/></g></svg>
<!-- autocomplete popup -->
<div class="a" style="left:264px;top:392px;width:514px;height:78px;background:#fff;border:1px solid #646464;box-shadow:3px 3px 3px rgba(0,0,0,.3)"></div>


<!-- ============ TASKBAR ============ -->
<div class="a" id="tb" style="left:0;top:728px;width:1366px;height:40px;background:#060606">
  <div class="a" style="left:600px;top:0;width:100px;height:40px;background:linear-gradient(90deg,rgba(60,55,30,0) 0%,rgba(60,55,30,.5) 40%,rgba(60,55,30,.5) 80%,rgba(60,55,30,0) 100%)"></div>
  <div class="a" style="left:637px;top:0;width:48px;height:40px;background:linear-gradient(90deg,#4a4632 0%,#3a372a 30%,#3a372a 70%,#4a4632 100%)"></div>
  <div class="a" style="left:637px;top:38px;width:48px;height:2px;background:#7fb8e6"></div>
  <div class="a" style="left:396px;top:38px;width:40px;height:2px;background:#7fb8e6"></div>
  <!-- start -->
  <svg style="left:16px;top:12px" width="16" height="16"><path d="M0 2.2L7 1.2V7H0ZM8 1.1L16 0V7H8ZM0 8H7V14.8L0 13.8ZM8 8H16V16L8 14.9Z" fill="#fff"/></svg>
  <!-- search -->
  <svg style="left:64px;top:12px" width="17" height="17"><circle cx="10.7" cy="5.8" r="5.2" fill="none" stroke="#fff" stroke-width="1.3"/><path d="M7.1 9.5L0.5 16" stroke="#fff" stroke-width="1.3"/></svg>
  <!-- task view -->
  <svg style="left:109px;top:13px" width="22" height="15"><rect x="5.3" y="0.7" width="11.3" height="13.2" fill="none" stroke="#fff" stroke-width="1.3"/><path d="M3.4 2.7H1.2V11.8H3.4M18.4 2.7H20.6V11.8H18.4" stroke="#fff" stroke-width="1.3" fill="none"/></svg>
  <!-- edge -->
  <svg style="left:160px;top:9px" width="22" height="23"><path d="M11.5 1C6.2 1 2.4 4.8 1 8.5C3.5 6 6 5 8.5 5.2C6.8 6.6 5.6 8.6 5.3 11C4.5 17 9 21.8 14.5 21.8C16.8 21.8 19 21 20.5 20V15.8C18.8 16.9 16.8 17.5 14.8 17.5C11.8 17.5 9.6 15.8 9.4 13.3H21C21.5 6.8 17.8 1 11.5 1ZM9.6 9.8C10 7.7 11.8 6.4 13.9 6.4C16 6.4 17.5 7.7 17.6 9.8Z" fill="#0c7cd5"/></svg>
  <!-- explorer -->
  <svg style="left:209px;top:11px" width="22" height="18"><path d="M0.3 1.2Q0.3 0.2 1.3 0.2H6.8L8.3 1.5V3H0.3Z" fill="#e8b830"/><rect x="0.3" y="1.5" width="21" height="16" fill="#ffe38a"/><path d="M0.3 1.5H6.5L8 3H21.3V4H0.3Z" fill="#f0c040"/><circle cx="2.2" cy="1.5" r=".7" fill="#3ab0e8"/><path d="M4.3 18V12Q4.3 10.2 6 10.2H15.8Q17.5 10.2 17.5 12V18H13.8V13.5H8V18Z" fill="#33ace8"/></svg>
  <!-- store -->
  <svg style="left:256px;top:7px" width="24" height="24"><path d="M8 6V4C8 1.5 9.8 0.8 12 0.8C14.2 0.8 16 1.5 16 4V6" stroke="#fff" stroke-width="1.5" fill="none"/><rect x="0.5" y="6" width="23" height="17.5" fill="#fff"/><rect x="6.5" y="9" width="5" height="5" fill="#f25022"/><rect x="12.5" y="9" width="5" height="5" fill="#7fba00"/><rect x="6.5" y="15" width="5" height="5" fill="#00a4ef"/><rect x="12.5" y="15" width="5" height="5" fill="#ffb900"/></svg>
  <!-- mail -->
  <svg style="left:306px;top:9px" width="25" height="20"><path d="M0 6.3L11.8 0.3L24.2 6.3V19.6H0Z" fill="#fff"/><path d="M1 6.4H23.6L15.6 10.6L19.2 16.2L12.6 11.2Z" fill="#060606"/></svg>
  <!-- firefox -->
  <svg style="left:355px;top:8px" width="24" height="24"><defs><radialGradient id="ffo" cx=".8" cy=".15" r="1.05"><stop offset="0" stop-color="#fff44a"/><stop offset=".35" stop-color="#ffb52a"/><stop offset=".65" stop-color="#ff5a20"/><stop offset="1" stop-color="#e0205a"/></radialGradient><linearGradient id="ffb" x1="0" y1="0" x2="0" y2="1"><stop offset="0" stop-color="#30a0f8"/><stop offset="1" stop-color="#6030d0"/></linearGradient></defs><path d="M16.5 1.2C20.5 2.8 23.2 6.8 23.2 12.2C23.2 18.4 18.2 23.2 12 23.2C5.8 23.2 0.8 18.4 0.8 12.2C0.8 9.5 1.6 7.2 3 5.5L4.2 3.5L5 6C6.5 4.5 8.5 3.5 10.5 3.2C13 2.8 15.5 3.2 17 4.2Z" fill="url(#ffo)"/><circle cx="12.5" cy="11" r="6.2" fill="url(#ffb)"/><path d="M5 8.5C6.5 7 8.5 6.5 10.5 7C9 8 8.8 9.8 9.5 11C10.5 12.8 13 13 15 12C16.5 11.2 17.5 10 18 8.5C18.5 12 17 16 13 17.2C9.5 18.2 6 16.5 5 13.5Z" fill="#ff8a1a"/></svg>
  <!-- chrome -->
  <svg style="left:404px;top:8px" width="24" height="24"><circle cx="12" cy="12" r="11.5" fill="#db4437"/><path d="M12 12L2 6.2A11.5 11.5 0 0 0 9 23.2Z" fill="#0f9d58"/><path d="M12 12L9 23.2A11.5 11.5 0 0 0 22 6.2L12 6.5Z" fill="#ffcd40"/><path d="M12 6.5H22A11.5 11.5 0 0 0 2 6.2L7 14Z" fill="#db4437"/><circle cx="12" cy="12" r="5.2" fill="#fff"/><circle cx="12" cy="12" r="4.1" fill="#4285f4"/></svg>
  <!-- excel -->
  <svg style="left:453px;top:9px" width="24" height="22"><rect x="9" y="2" width="14.5" height="18" fill="#fff"/><path d="M11 5H22M11 8.5H22M11 12H22M11 15.5H22M16 4V18" stroke="#1e7145" stroke-width="1"/><path d="M0 3L13 0.5V21.5L0 19Z" fill="#1e7145"/><path d="M3.5 7L8.5 15M8.5 7L3.5 15" stroke="#fff" stroke-width="2"/></svg>
  <!-- ppt -->
  <svg style="left:502px;top:9px" width="24" height="22"><rect x="9" y="2" width="14.5" height="18" fill="#fff"/><path d="M15 5A5 5 0 1 0 20 10H15Z" fill="#d24726"/><path d="M13 15H22" stroke="#d24726" stroke-width="1.5"/><path d="M0 3L13 0.5V21.5L0 19Z" fill="#d24726"/><path d="M4 16V6.5H7C9 6.5 9.5 8 9.5 9.3C9.5 10.6 9 12 7 12H4" stroke="#fff" stroke-width="2" fill="none"/></svg>
  <!-- publisher -->
  <svg style="left:551px;top:9px" width="24" height="22"><rect x="17" y="1" width="6.5" height="15" fill="#fff"/><rect x="16" y="2" width="1" height="14" fill="#077568"/><rect x="12" y="3" width="9" height="16.5" fill="#fff"/><path d="M13 9H20M13 11H20M13 13H20M13 15H20M13 17H20" stroke="#077568" stroke-width="0.9"/><path d="M0 2.8L13 0.3V21.7L0 19.2Z" fill="#077568"/><path d="M4 16V6.5H7C9 6.5 9.5 8 9.5 9.3C9.5 10.6 9 12 7 12H4" stroke="#fff" stroke-width="2" fill="none"/></svg>
  <!-- word -->
  <svg style="left:600px;top:9px" width="24" height="22"><rect x="9" y="2" width="14.5" height="18" fill="#fff"/><path d="M13 5H22M13 8.5H22M13 12H22M13 15.5H22" stroke="#2b579a" stroke-width="1.2"/><path d="M0 3L13 0.5V21.5L0 19Z" fill="#2b579a"/><path d="M2.5 7L4.3 15L6.5 9L8.7 15L10.5 7" stroke="#fff" stroke-width="1.5" fill="none"/></svg>
  <!-- paint -->
  <svg style="left:648px;top:7px" width="26" height="26"><path d="M11.5 3.5C5.5 3.5 1.2 7 1.2 11.5C1.2 16.5 5 20 8.5 20C10.5 20 10.8 18.5 12 17.5C13.5 16.3 16 17.5 19 16C22 14.5 23 12 22.2 9.5C21 5.8 17 3.5 11.5 3.5Z" fill="#cfe6f5" stroke="#3a8cc8" stroke-width="1.1"/><circle cx="4.8" cy="12" r="1.9" fill="#e94e3c"/><circle cx="8.5" cy="8.5" r="1.9" fill="#3cb44a"/><circle cx="13.8" cy="6.3" r="1.9" fill="#f5a623"/><circle cx="11" cy="13" r="1.4" fill="#2a3a48"/><path d="M23 3.5L12 22.5" stroke="#f08a1a" stroke-width="2.6" stroke-linecap="round"/><path d="M12 22.5L11.5 23.5" stroke="#c06010" stroke-width="1.5"/><path d="M20.5 4.5L24.8 1L23.2 6.5Z" fill="#e0b070"/></svg>
  <!-- tray -->
  <svg style="left:1086px;top:12px" width="15" height="15"><circle cx="10.5" cy="3.5" r="2.8" fill="none" stroke="#fff" stroke-width="1.2"/><path d="M6 10C6.5 7.5 8 6.5 10.5 6.5C13 6.5 14.5 8 14.5 10" stroke="#fff" stroke-width="1.2" fill="none"/><circle cx="4.5" cy="8" r="2.5" fill="#060606" stroke="#fff" stroke-width="1.2"/><path d="M0.6 14.5C1 12 2.5 11 4.5 11C6.5 11 8 12 8.4 14.5" stroke="#fff" stroke-width="1.2" fill="none"/></svg>
  <svg style="left:1123px;top:16px" width="12" height="8"><path d="M0.5 7.5L6 1.5L11.5 7.5" stroke="#fff" stroke-width="1.3" fill="none"/></svg>
  <svg style="left:1146px;top:16px" width="16" height="9"><rect x="0.6" y="0.6" width="13" height="7.8" fill="none" stroke="#fff" stroke-width="1.2"/><rect x="2.5" y="2.5" width="9" height="4" fill="#fff"/><rect x="14" y="3" width="1.8" height="3" fill="#fff"/></svg>
  <svg style="left:1172px;top:11px" width="14" height="14"><path d="M1 13A12 12 0 0 1 13 1M3.5 13A9.5 9.5 0 0 1 13 3.5M6 13A7 7 0 0 1 13 6M8.5 13A4.5 4.5 0 0 1 13 8.5" stroke="#fff" stroke-width="1" fill="none"/><circle cx="11.5" cy="11.5" r="1.6" fill="#fff"/></svg>
  <svg style="left:1193px;top:12px" width="18" height="15"><path d="M0.6 4.5H3.5L7.5 0.8V14.2L3.5 10.5H0.6Z" fill="none" stroke="#fff" stroke-width="1.1"/><path d="M10 4.5A3.5 3.5 0 0 1 10 10.5M12.5 2.5A6 6 0 0 1 12.5 12.5M15 0.8A8.5 8.5 0 0 1 15 14.2" stroke="#fff" stroke-width="1.1" fill="none"/></svg>
  <div class="t" style="left:1221px;top:14px;color:#fff;font-size:12px;transform:scaleX(0.78);transform-origin:0 0">ESP</div>
  <div class="t" style="left:1254px;top:5px;width:51px;text-align:center;color:#fff;font-size:12px;letter-spacing:-0.47px">0:02</div>
  <div class="t" style="left:1254px;top:23px;width:55px;text-align:center;color:#fff;font-size:12px;letter-spacing:-0.19px">11/9/2019</div>
  <svg style="left:1323px;top:10px" width="28" height="28"><rect x="2.1" y="2" width="16.2" height="13" fill="#fff"/><path d="M4.5 14.5L6.5 17.5L8.5 14.5Z" fill="#fff"/><path d="M5 5.4H15M5 8.2H15M5 11.4H13" stroke="#060606" stroke-width="1.1"/><circle cx="17.7" cy="17.6" r="9.2" fill="#060606"/><circle cx="17.7" cy="17.6" r="8" fill="#2b2b2b" stroke="#8a8a8a" stroke-width="0.8"/><text x="17.8" y="21.9" text-anchor="middle" font-family="Liberation Sans" font-weight="bold" font-size="12" fill="#fff">2</text></svg>
  <div class="a" style="left:1361px;top:0;width:1px;height:40px;background:#666"></div>
</div>

</body></html>
